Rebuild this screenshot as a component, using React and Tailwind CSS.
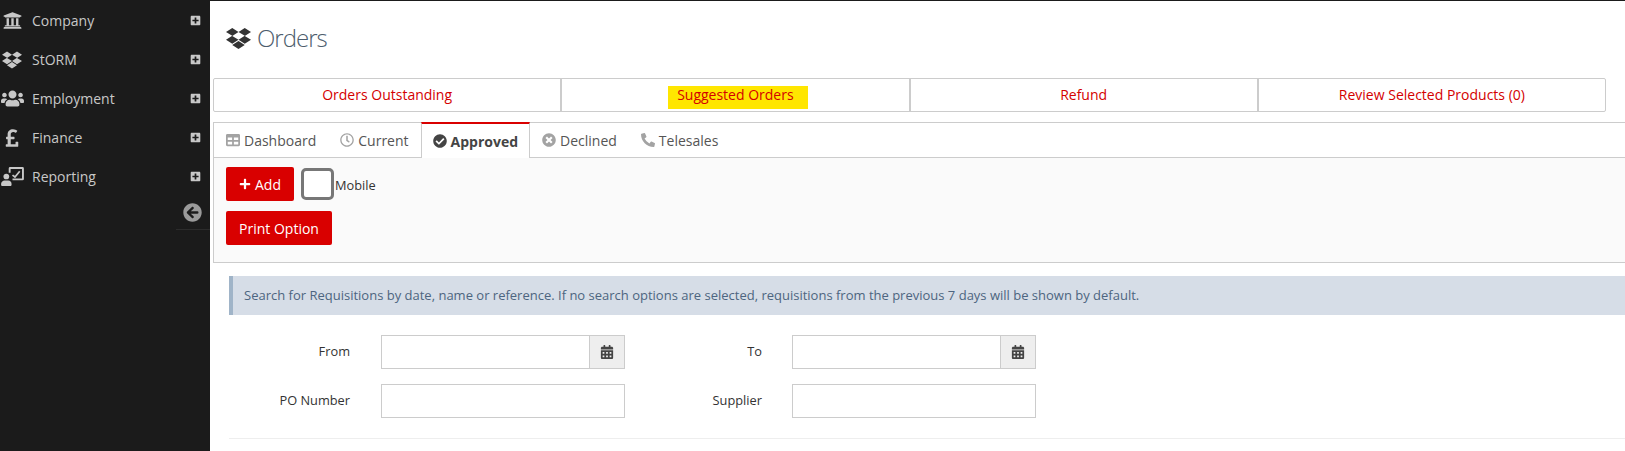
import React from "react";
import { FaUniversity, FaDropbox, FaUsers, FaPoundSign, FaPlusSquare, FaArrowCircleLeft, FaTable, FaRegClock, FaCheckCircle, FaTimesCircle, FaPhoneAlt, FaPlus, FaCalendarAlt } from "react-icons/fa";

function ReportIcon({ className }) {
  return (
    <svg viewBox="0 0 24 20" className={className} fill="currentColor">
      <path d="M8 1.5A1.5 1.5 0 0 1 9.5 0h13A1.5 1.5 0 0 1 24 1.5v11a1.5 1.5 0 0 1-1.5 1.5H12v-2h10V2H10v4H8z" />
      <path d="M12 8.5l2.6 2 5-6" fill="none" stroke="currentColor" strokeWidth="1.8" />
      <circle cx="5.5" cy="10" r="3" />
      <path d="M0 18c0-2.500 2-3.800 3.500-3.800h4C9.500 14.200 11 15.500 11 18v.6c0 .8-.6 1.400-1.400 1.400H1.400C.6 20 0 19.400 0 18.600z" />
    </svg>
  );
}

const nav = [
  ["Company", FaUniversity, "text-[19px]"],
  ["StORM", FaDropbox, "text-[20px]"],
  ["Employment", FaUsers, "text-[23px]"],
  ["Finance", FaPoundSign, "text-[20px]"],
  ["Reporting", ReportIcon, "text-[23px]"],
];
const links = ["Orders Outstanding", "Suggested Orders", "Refund", "Review Selected Products (0)"];

function Tab({ icon: Icon, children }) {
  return (
    <div className="flex items-center gap-[4px] px-[12px]">
      <Icon className="text-[14px] text-[#a3a3a3]" />
      {children}
    </div>
  );
}

function Field({ label, date, width, gap }) {
  return (
    <div className="flex items-center">
      <label className={`${width} text-right text-[12.8px] text-[#333]`}>{label}</label>
      <div className={`${gap} flex h-[34px] w-[244px] border border-[#ccc] bg-white`}>
        <div className="flex-1" />
        {date && (
          <div className="flex w-[35px] items-center justify-center border-l border-[#ccc] bg-[#eee] text-[14px] text-[#444]">
            <FaCalendarAlt />
          </div>
        )}
      </div>
    </div>
  );
}

export default function App() {
  return (
    <div className="flex h-[451px] w-[1625px] overflow-hidden border-t border-[#1b1b1b] bg-white font-['Open_Sans',sans-serif] text-[14px]">
      <aside className="flex w-[210px] shrink-0 flex-col bg-[#1b1b1b]">
        {nav.map(([name, Icon, size]) => (
          <div key={name} className="flex h-[39px] items-center text-[#c8c8c8]">
            <span className={`flex w-[24px] justify-center ${size}`}>
              <Icon className={name === "Reporting" ? "h-[19px] w-[23px]" : ""} />
            </span>
            <span className="ml-[8px] flex-1 text-[14px]">{name}</span>
            <FaPlusSquare className="mr-[9px] text-[11px] text-[#c8c8c8]" />
          </div>
        ))}
        <div className="ml-[176px] flex h-[34px] items-center justify-end border-b border-[#2c2c2c] pr-[8px]">
          <FaArrowCircleLeft className="text-[19px] text-[#9a9a9a]" />
        </div>
      </aside>
      <main className="min-w-0 flex-1">
        <h1 className="flex h-[77px] items-center pl-[16px] pb-[3px] text-[24px] font-light tracking-[-1px] text-[#4d5d6d]">
          <FaDropbox className="mr-[6px] text-[25px] text-[#333]" />
          Orders
        </h1>
        <div className="ml-[3px] flex h-[34px] w-[1393px] rounded-[2px] border border-[#ccc]">
          {links.map((l, i) => (
            <div key={l} className={`flex flex-1 items-center justify-center text-[14px] leading-[18px] text-[#d40000] ${i ? "border-l-2 border-[#ccc]" : ""}`}>
              <span className={i === 1 ? "-mr-[5px] -mb-[5px] bg-[#ffe600] pr-[14px] pb-[5px] pl-[9px]" : ""}>{l}</span>
            </div>
          ))}
        </div>
        <div className="ml-[3px] mt-[10px] border-l border-[#ccc]">
          <div className="flex h-[36px] border-y border-[#ccc] pl-[0px] text-[14px] text-[#555]">
            <Tab icon={FaTable}>Dashboard</Tab>
            <Tab icon={FaRegClock}>Current</Tab>
            <div className="relative z-10 -mt-[1px] flex h-[36px] items-center gap-[4px] border-x border-t-2 border-x-[#ccc] border-t-[#d90000] bg-white px-[11px] font-bold text-[#444]">
              <FaCheckCircle className="text-[14px]" />
              Approved
            </div>
            <Tab icon={FaTimesCircle}>Declined</Tab>
            <Tab icon={FaPhoneAlt}>Telesales</Tab>
          </div>
          <div className="h-[105px] border-b border-[#ccc] bg-[#fafafa] pl-[12px] pt-[9px]">
            <div className="flex items-start">
              <button className="flex h-[34px] w-[68px] items-center justify-center gap-[4px] rounded-[2px] bg-[#d90000] text-[14px] text-white">
                <FaPlus className="text-[12px]" /> Add
              </button>
              <span className="ml-[7px] mt-[1px] h-[32px] w-[33px] rounded-[5px] border-[3px] border-[#777] bg-white" />
              <span className="ml-[1px] mt-[9px] text-[12.8px] text-[#333]">Mobile</span>
            </div>
            <button className="mt-[10px] h-[34px] w-[106px] rounded-[2px] bg-[#d90000] text-[14px] text-white">Print Option</button>
          </div>
        </div>
        <div className="ml-[19px] mt-[13px] flex h-[39px] items-center border-l-[4px] border-[#a0b4c8] bg-[#d6dde7] pl-[11px] text-[13px] text-[#4d6580]">
          Search for Requisitions by date, name or reference. If no search options are selected, requisitions from the previous 7 days will be shown by default.
        </div>
        <div className="ml-[19px] mt-[20px] flex flex-col gap-[15px]">
          <div className="flex"><Field label="From" date width="w-[121px]" gap="ml-[31px]" /><Field label="To" date width="w-[137px]" gap="ml-[30px]" /></div>
          <div className="flex"><Field label="PO Number" width="w-[121px]" gap="ml-[31px]" /><Field label="Supplier" width="w-[137px]" gap="ml-[30px]" /></div>
        </div>
        <div className="ml-[19px] mt-[20px] border-t border-[#eee]" />
      </main>
    </div>
  );
}
